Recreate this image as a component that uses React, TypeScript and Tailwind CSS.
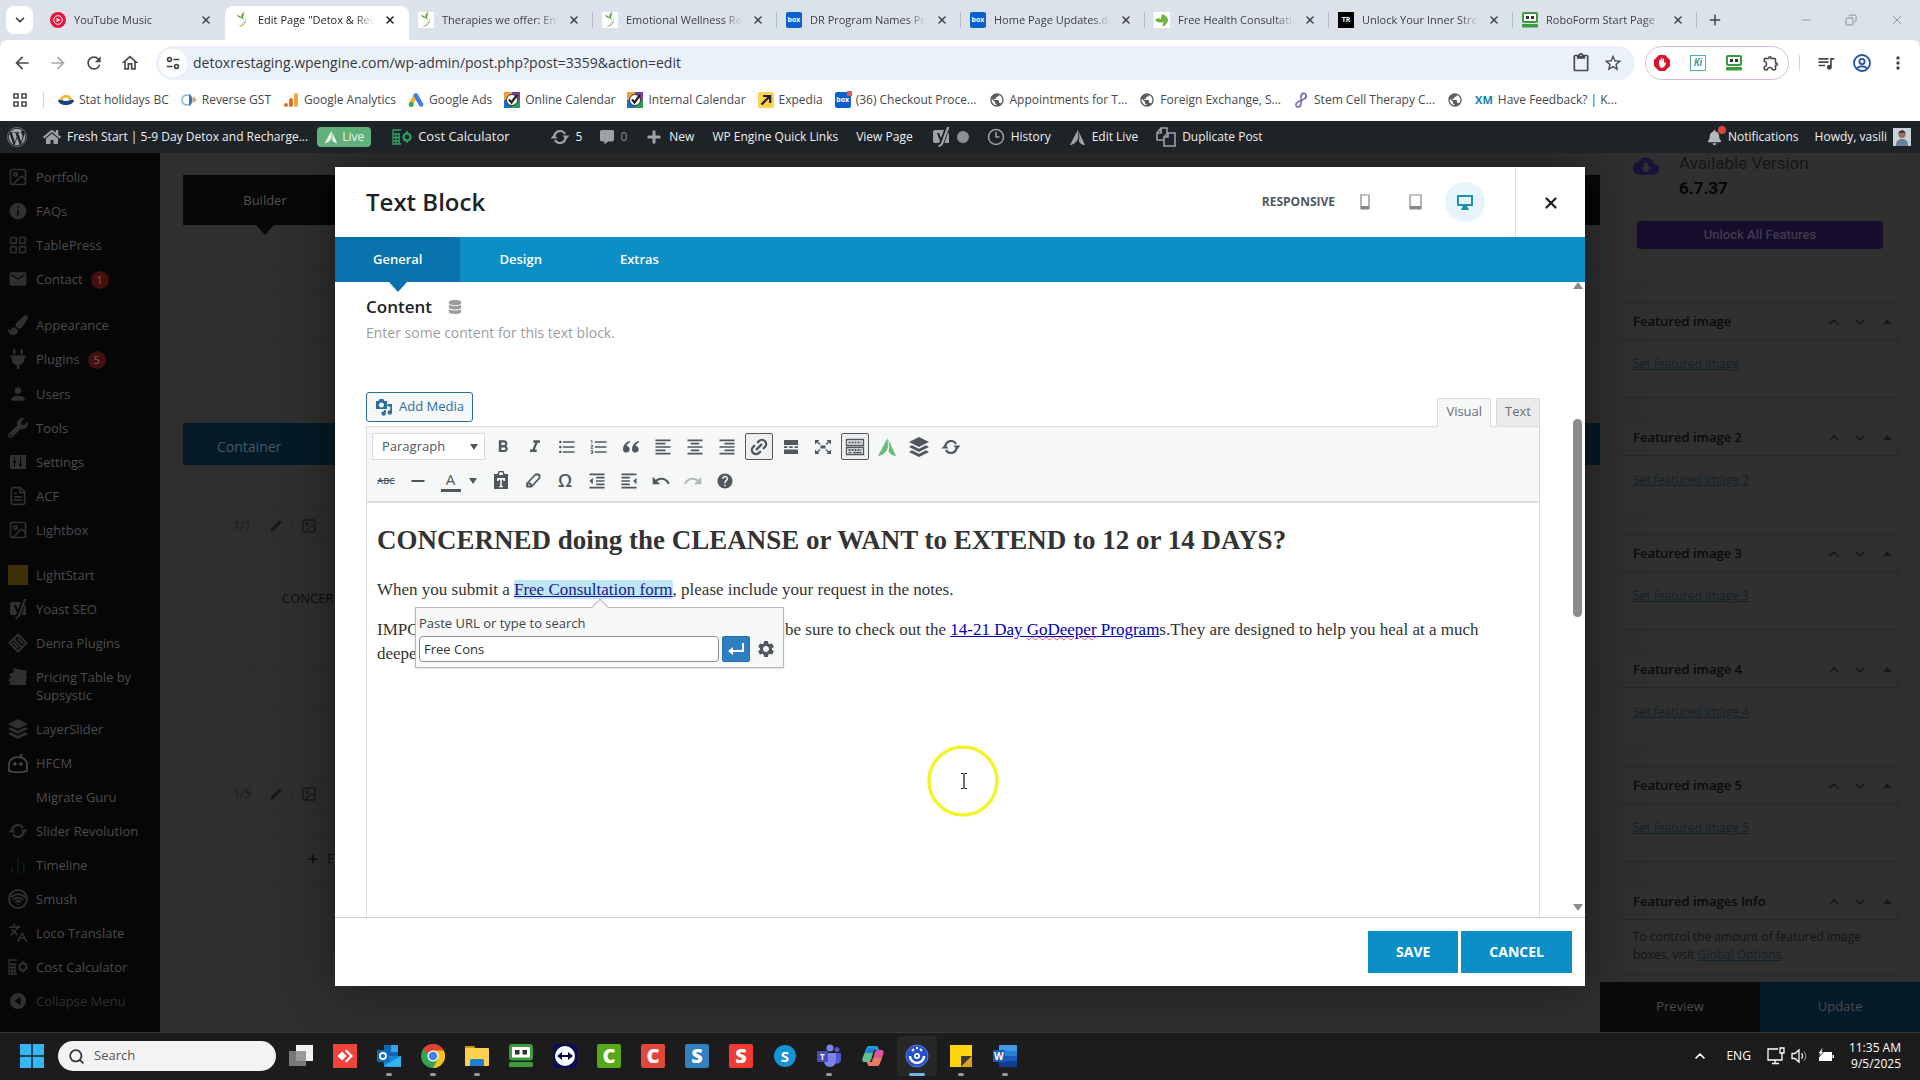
import type { ReactNode } from 'react'
import {
  MdArrowBack, MdArrowForward, MdCloudDownload, MdContentPaste, MdEmail, MdFormatAlignCenter, MdFormatAlignLeft,
  MdFormatAlignRight, MdFormatBold, MdFormatIndentDecrease, MdFormatIndentIncrease, MdFormatItalic,
  MdFormatListBulleted, MdFormatListNumbered, MdHelp, MdInfo, MdMoreVert, MdOutlineExtension, MdOutlineHome,
  MdPerson, MdPublic, MdQueueMusic, MdRefresh, MdRedo, MdSettings, MdStarBorder, MdUndo,
} from 'react-icons/md'
import { FaBell, FaCommentAlt, FaDatabase, FaHome, FaPaintBrush, FaPlug, FaWordpress, FaWrench } from 'react-icons/fa'
import {
  ChartNoAxesColumn, ChevronDown, ChevronUp, Clock3, Copy, FileText, Image, Languages, LayoutGrid, Link2, Minus,
  Pencil, Plus, Search, Wifi, X,
} from 'lucide-react'

/* ---------- small drawings ---------- */

function Leaf({ side = false }: { side?: boolean }) {
  return (
    <svg viewBox="0 0 16 16" className="size-4 shrink-0">
      <rect width="16" height="16" fill="#fff" />
      {side ? (
        <path d="M1 8c2-2 4-2 6-1 0-2 0-4 2-5 3 2 5 4 5 6s-2 5-5 7c-1-2 0-3 1-5-4 1-6 1-9-2z" fill="#6cb33f" />
      ) : (
        <>
          <path d="M3 3c2 0 3 1 4 2 0-2 1-4 3-5 0 3 0 4-1 5l1 3c-2-1-2-2-3-2-2 0-3-1-4-3z" fill="#6cb33f" />
          <path d="M12 6c1 4-1 7-6 9l-1-1c4-2 6-4 7-8z" fill="#a4c98a" />
        </>
      )}
    </svg>
  )
}

function BoxLogo() {
  return (
    <span className="flex size-4 shrink-0 items-center justify-center rounded-xs bg-[#0b5fd0] text-[7px] font-bold text-white">
      box
    </span>
  )
}

function RoboForm({ className = 'size-4' }: { className?: string }) {
  return (
    <svg viewBox="0 0 16 16" className={`${className} shrink-0`}>
      <rect x="1" y="1" width="14" height="9" rx="1" fill="#fff" stroke="#3c9a3f" strokeWidth="2" />
      <rect x="4" y="4" width="3" height="3" fill="#333" />
      <rect x="9" y="4" width="3" height="3" fill="#333" />
      <rect y="12" width="16" height="3.4" rx="1" fill="#3c9a3f" />
    </svg>
  )
}

function YouTubeMusic() {
  return (
    <svg viewBox="0 0 16 16" className="size-4 shrink-0">
      <circle cx="8" cy="8" r="8" fill="#e6163c" />
      <circle cx="8" cy="8" r="4.3" fill="none" stroke="#fff" />
      <path d="M6.6 5.7v4.6L10.3 8z" fill="#fff" />
    </svg>
  )
}

function Avada({ className }: { className?: string }) {
  return (
    <svg viewBox="0 0 20 20" fill="currentColor" className={className}>
      <path d="M10.500 1 1 19c6-1 9-5 10-9z" />
      <path d="M10.500 1 19 19c-4-.5-6-2-7.500-5 1-2 1-7-1-13z" />
    </svg>
  )
}

function Yoast({ className }: { className?: string }) {
  return (
    <svg viewBox="0 0 20 20" fill="currentColor" className={className}>
      <path d="M4 3h9l-3 8-2-5H6l3 8c-.6 1.500-1.200 2-3 2H4a2 2 0 0 1-2-2V5a2 2 0 0 1 2-2z" />
      <path d="M16 0h2.500l-6 16c-1 2.500-2.500 3.800-5 4v-2c1.500-.3 2.400-1.200 3-3z" />
      <path d="M17 6l1 .5V16h-4.500z" />
    </svg>
  )
}

function CalcIcon({ className }: { className?: string }) {
  return (
    <svg viewBox="0 0 20 16" fill="none" stroke="currentColor" className={className}>
      <path d="M9 1H1v14h8M1 5h7M4 5v10M1 8.500h7M1 12h7M7 5v10" strokeWidth="1.300" />
      <circle cx="15" cy="8" r="3.500" strokeWidth="2.200" />
      <path d="M15 2v3M15 11v3M12 12l1-2" strokeWidth="1.500" />
    </svg>
  )
}

function Refresh({ className }: { className?: string }) {
  return (
    <svg viewBox="0 0 20 20" fill="none" stroke="currentColor" strokeWidth="2.200" className={className}>
      <path d="M4.500 9a5.600 5.600 0 0 1 10.500-2M15.500 11A5.600 5.600 0 0 1 5 13" />
      <path d="M12.500 8.500h7L16 12.500zM7.500 11.500h-7L4 7.500z" fill="currentColor" stroke="none" />
    </svg>
  )
}

function Stack({ className }: { className?: string }) {
  return (
    <svg viewBox="0 0 20 20" fill="currentColor" className={className}>
      <path d="M10 0l10 5-10 5L0 5z" />
      <path d="M3 8.200 0 10l10 5 10-5-3-1.800-7 3.600z" />
      <path d="M3 13.200 0 15l10 5 10-5-3-1.800-7 3.600z" />
    </svg>
  )
}

function Check() {
  return (
    <svg viewBox="0 0 16 16" className="size-4 shrink-0">
      <path d="M0 0h8v8H0z" fill="#e8a33d" />
      <path d="M8 0h8v8H8z" fill="#7a3f98" />
      <path d="M0 8h8v8H0z" fill="#1f6fb5" />
      <path d="M8 8h8v8H8z" fill="#2f9a55" />
      <circle cx="8" cy="8" r="5.500" fill="#fff" stroke="#333" />
      <path d="M5 7.500l2.500 3L13 3" fill="none" stroke="#222" strokeWidth="2.200" />
    </svg>
  )
}

/* ---------- browser chrome ---------- */

const tabs: { title: string; icon: ReactNode; active?: boolean }[] = [
  { title: 'YouTube Music', icon: <YouTubeMusic /> },
  { title: 'Edit Page "Detox & Recharge', icon: <Leaf />, active: true },
  { title: 'Therapies we offer: Emotional', icon: <Leaf /> },
  { title: 'Emotional Wellness Retreat', icon: <Leaf /> },
  { title: 'DR Program Names Prices', icon: <BoxLogo /> },
  { title: 'Home Page Updates.docx', icon: <BoxLogo /> },
  { title: 'Free Health Consultation', icon: <Leaf side /> },
  {
    title: 'Unlock Your Inner Strength',
    icon: <span className="flex size-4 shrink-0 items-center justify-center bg-black text-[7px] font-bold text-white">TR</span>,
  },
  { title: 'RoboForm Start Page', icon: <RoboForm /> },
]

function TabStrip() {
  return (
    <div className="flex h-10 items-center bg-[#dce2ea] text-[#3b4046]">
      <button aria-label="Search tabs" className="mr-2 ml-[6px] flex h-7 w-[27px] items-center justify-center rounded-lg bg-white">
        <ChevronDown className="size-[14px]" strokeWidth={3} />
      </button>
      {tabs.map((tab, i) => (
        <div
          key={tab.title}
          className={
            tab.active
              ? 'flex h-full w-[184px] items-center pt-[6px]'
              : `flex h-full w-[184px] items-center ${i > 1 ? 'bg-[linear-gradient(#b4bdc9,#b4bdc9)] bg-[length:1px_16px] bg-[position:right_center] bg-no-repeat' : ''}`
          }
        >
          <div
            className={
              tab.active
                ? 'flex h-full w-full items-center gap-2 rounded-t-lg bg-white pr-[11px] pb-[6px] pl-[9px] text-[#1f1f1f]'
                : 'flex w-full items-center gap-2 pr-[11px] pl-[9px]'
            }
          >
            {tab.icon}
            <span className="flex-1 overflow-hidden text-[11px] whitespace-nowrap [mask-image:linear-gradient(to_right,black_84%,transparent)]">
              {tab.title}
            </span>
            <button aria-label={`Close ${tab.title}`} className="p-[2px]">
              <X className="size-3" strokeWidth={3} />
            </button>
          </div>
        </div>
      ))}
      <button aria-label="New tab" className="ml-[10px]">
        <Plus className="size-4" strokeWidth={2.2} />
      </button>
      <div className="ml-auto flex items-center gap-8 pr-[15px] text-[#8a9099]">
        <button aria-label="Minimize"><Minus className="size-[14px]" strokeWidth={1.5} /></button>
        <button aria-label="Restore"><Copy className="size-3 -scale-x-100" strokeWidth={2} /></button>
        <button aria-label="Close window"><X className="size-4" strokeWidth={1.3} /></button>
      </div>
    </div>
  )
}

function AddressBar() {
  return (
    <div className="bg-[#dce2ea]">
      <div className="flex h-[45px] items-center rounded-t-lg bg-white text-[#45484d]">
        <div className="flex items-center gap-4 pl-3">
          <button aria-label="Back"><MdArrowBack className="size-5" /></button>
          <button aria-label="Forward" className="text-[#a6a9ad]"><MdArrowForward className="size-5" /></button>
          <button aria-label="Reload"><MdRefresh className="size-5" /></button>
          <button aria-label="Home"><MdOutlineHome className="size-5" /></button>
        </div>
        <div className="ml-4 flex h-[34px] flex-1 items-center rounded-full bg-[#ebf1f9] pr-3 pl-[3px]">
          <span className="flex size-7 items-center justify-center rounded-full bg-white">
            <svg viewBox="0 0 16 16" className="size-[14px]" fill="none" stroke="#3b4046" strokeWidth="1.800">
              <circle cx="4" cy="4" r="2.200" />
              <path d="M8.500 4H15M1 12h6.500" />
              <circle cx="12" cy="12" r="2.200" />
            </svg>
          </span>
          <input
            aria-label="Address"
            defaultValue="detoxrestaging.wpengine.com/wp-admin/post.php?post=3359&action=edit"
            className="ml-[6px] flex-1 bg-transparent text-[14px] text-[#33373d] outline-none"
          />
          <MdContentPaste className="size-5" />
          <MdStarBorder className="ml-3 size-5" />
        </div>
        <div className="ml-[10px] flex h-[34px] items-center gap-5 rounded-full border border-[#d5bcd6] px-2">
          <svg viewBox="0 0 16 16" className="size-4">
            <path d="M5 0h6l5 5v6l-5 5H5l-5-5V5z" fill="#d4152b" />
            <path d="M5 7.500V5h1.200v2L6.800 3h1.200l.3 4 .5-3.500H10l.3 5L12 7c.5 2-2 6-4 6S5 11 5 7.500z" fill="#fff" />
          </svg>
          <span className="flex size-4 items-center justify-center border border-[#4fb3ad] text-[10px] font-semibold text-[#1f8f88] italic">Ki</span>
          <RoboForm />
          <MdOutlineExtension className="size-[18px]" />
        </div>
        <span className="mx-[10px] h-4 w-px bg-[#c9d6ea]" />
        <div className="flex items-center gap-4 pr-3 pl-[6px]">
          <button aria-label="Media"><MdQueueMusic className="size-5" /></button>
          <button aria-label="Profile">
            <svg viewBox="0 0 20 20" className="size-5" fill="none" stroke="#27549b" strokeWidth="1.800">
              <circle cx="10" cy="10" r="8" />
              <circle cx="10" cy="8.500" r="2.600" />
              <path d="M4.500 15.500c3-3 8-3 11 0" />
            </svg>
          </button>
          <button aria-label="Menu"><MdMoreVert className="size-5" /></button>
        </div>
      </div>
    </div>
  )
}

const bookmarks: { label: string; icon: ReactNode }[] = [
  {
    label: 'Stat holidays BC',
    icon: (
      <svg viewBox="0 0 16 16" className="size-4">
        <path d="M2 8a6 5 0 0 1 12 0z" fill="#f5b52e" />
        <path d="M5 8a3 2.500 0 0 1 6 0z" fill="#fff" />
        <path d="M0 8c4-1 5 1 8 1s5-2 8-1c0 3-4 5-8 5S0 11 0 8z" fill="#1a4480" />
      </svg>
    ),
  },
  {
    label: 'Reverse GST',
    icon: (
      <svg viewBox="0 0 16 16" className="size-4">
        <circle cx="6" cy="8" r="5" fill="none" stroke="#9dbdd6" strokeWidth="2" />
        <path d="M8 2v12c4-1 4-11 0-12z" fill="#3576a8" />
        <path d="M12 4l4 4-4 3z" fill="#e9a06b" />
      </svg>
    ),
  },
  {
    label: 'Google Analytics',
    icon: (
      <svg viewBox="0 0 16 16" className="size-4">
        <rect x="11" y="1" width="4" height="14" rx="2" fill="#f2a33a" />
        <rect x="6" y="6" width="4" height="9" rx="2" fill="#dd7326" />
        <circle cx="3" cy="13" r="2" fill="#dd7326" />
      </svg>
    ),
  },
  {
    label: 'Google Ads',
    icon: (
      <svg viewBox="0 0 16 16" className="size-4" strokeWidth="4.500" strokeLinecap="round">
        <path d="M7.500 3.500 3.500 11" stroke="#f3b72e" />
        <path d="M8 3.500 13 12.500" stroke="#3f7de8" />
        <circle cx="3.200" cy="12.500" r="2.500" fill="#34a853" />
      </svg>
    ),
  },
  { label: 'Online Calendar', icon: <Check /> },
  { label: 'Internal Calendar', icon: <Check /> },
  {
    label: 'Expedia',
    icon: (
      <svg viewBox="0 0 16 16" className="size-4">
        <rect width="16" height="16" rx="2" fill="#fcd34a" />
        <path d="M3.500 12.500 12 4M5 4h7.200v7" fill="none" stroke="#191e3b" strokeWidth="2.200" />
      </svg>
    ),
  },
  {
    label: '(36) Checkout Proce...',
    icon: (
      <span className="relative">
        <BoxLogo />
        <span className="absolute -top-px -right-px size-[5px] bg-[#e2574c]" />
      </span>
    ),
  },
  { label: 'Appointments for T...', icon: <MdPublic className="size-4 text-[#5a5d61]" /> },
  { label: 'Foreign Exchange, S...', icon: <MdPublic className="size-4 text-[#5a5d61]" /> },
  {
    label: 'Stem Cell Therapy C...',
    icon: (
      <svg viewBox="0 0 16 16" className="size-4" fill="none" stroke="#7468b5" strokeWidth="1.600">
        <path d="M13 3c-1-3-5-2-5 2 0 3 1 4 0 7-1 4-6 4-5 0 1-3 6-3 8-5 2-1 3-2 2-4z" />
      </svg>
    ),
  },
  { label: '', icon: <MdPublic className="size-4 text-[#5a5d61]" /> },
  { label: 'Have Feedback? | K...', icon: <span className="text-[11px] font-bold text-[#1284b8]">XM</span> },
]

function Bookmarks() {
  return (
    <nav className="flex h-9 items-center bg-white pb-[6px] text-[12px] text-[#45484d]">
      <svg viewBox="0 0 14 14" className="ml-[13px] size-[14px]" fill="none" stroke="currentColor" strokeWidth="1.600">
        <path d="M1 1h4v4H1zM9 1h4v4H9zM1 9h4v4H1zM9 9h4v4H9z" />
      </svg>
      <span className="mr-[14px] ml-4 h-4 w-px bg-[#c9d6ea]" />
      <div className="flex items-center gap-3">
        {bookmarks.map((b, i) => (
          <a key={i} href="#" aria-label={b.label || 'Bookmark'} className="flex items-center gap-[5px] whitespace-nowrap">
            {b.icon}
            {b.label && <span>{b.label}</span>}
          </a>
        ))}
      </div>
    </nav>
  )
}

/* ---------- WordPress ---------- */

function BarItem({ icon, children }: { icon?: ReactNode; children?: ReactNode }) {
  return (
    <a href="#" className="flex items-center gap-[6px] px-[9px] whitespace-nowrap">
      {icon && <span className="text-[#9ca2a7]">{icon}</span>}
      {children}
    </a>
  )
}

function AdminBar() {
  return (
    <div className="flex h-8 items-center bg-[#1d2327] text-[12px] text-[#f0f0f1]">
      <a href="#" aria-label="About WordPress" className="px-[7px] text-[#9ca2a7]">
        <FaWordpress className="size-5" />
      </a>
      <BarItem icon={<FaHome className="size-[18px]" />}>Fresh Start | 5-9 Day Detox and Recharge...</BarItem>
      <a href="#" className="mr-3 flex h-5 items-center gap-1 rounded-sm bg-[#5fb17b] px-[7px]">
        <Avada className="size-[14px]" />
        Live
      </a>
      <BarItem icon={<CalcIcon className="h-4 w-5 text-[#2da562]" />}>
        <span className="text-[13px]">Cost Calculator</span>
      </BarItem>
      <span className="w-[22px]" />
      <BarItem icon={<Refresh className="size-5" />}>5</BarItem>
      <BarItem icon={<FaCommentAlt className="size-[14px]" />}>
        <span className="text-[#8c9196]">0</span>
      </BarItem>
      <BarItem icon={<Plus className="size-[18px]" strokeWidth={4} />}>New</BarItem>
      <BarItem>WP Engine Quick Links</BarItem>
      <BarItem>View Page</BarItem>
      <BarItem icon={<Yoast className="size-5" />}>
        <span className="size-3 rounded-full bg-[#8c8f94]" />
      </BarItem>
      <BarItem icon={<Clock3 className="size-[18px]" />}>History</BarItem>
      <BarItem icon={<Avada className="size-[17px]" />}>Edit Live</BarItem>
      <BarItem
        icon={
          <svg viewBox="0 0 20 20" className="size-5" fill="none" stroke="currentColor" strokeWidth="1.600">
            <path d="M8 13H1V6l4-5h6v5M5 1v5H1M8 10l4-4h7v13H8zM12 6v4H8" />
          </svg>
        }
      >
        Duplicate Post
      </BarItem>
      <div className="ml-auto flex items-center gap-4 pr-[9px]">
        <a href="#" className="flex items-center gap-[6px]">
          <span className="relative text-[#b5b9bd]">
            <FaBell className="size-[15px]" />
            <span className="absolute -top-1 -right-1 size-2 rounded-full bg-[#e0443e]" />
          </span>
          Notifications
        </a>
        <a href="#" className="flex items-center gap-[6px]">
          Howdy, vasili
          <svg viewBox="0 0 18 18" className="size-[18px]">
            <rect width="18" height="18" fill="#c9d2d8" />
            <circle cx="9" cy="6.500" r="3.500" fill="#96705a" />
            <path d="M3 18c0-5 2-7 6-7s6 2 6 7z" fill="#6b7f99" />
            <path d="M5.500 6c0-5 7-5 7 0-1-2-6-2-7 0z" fill="#3b2d26" />
          </svg>
        </a>
      </div>
    </div>
  )
}

const menu: { label: string; icon: ReactNode; count?: number; gap?: boolean }[] = [
  { label: 'Portfolio', icon: <Image /> },
  { label: 'FAQs', icon: <MdInfo /> },
  { label: 'TablePress', icon: <LayoutGrid /> },
  { label: 'Contact', icon: <MdEmail />, count: 1 },
  { label: 'Appearance', icon: <FaPaintBrush />, gap: true },
  { label: 'Plugins', icon: <FaPlug />, count: 5 },
  { label: 'Users', icon: <MdPerson /> },
  { label: 'Tools', icon: <FaWrench /> },
  {
    label: 'Settings',
    icon: (
      <svg viewBox="0 0 20 20" fill="currentColor" fillRule="evenodd">
        <path d="M2 3h16v14H2zM6 5v4H5v2h1v4h1v-4h1V9H7V5zm6 0v7h-1v2h1v1h1v-1h1v-2h-1V5z" />
      </svg>
    ),
  },
  { label: 'ACF', icon: <FileText /> },
  { label: 'Lightbox', icon: <Image /> },
  { label: 'LightStart', icon: <span className="block size-full bg-[#3f3009]" />, gap: true },
  { label: 'Yoast SEO', icon: <Yoast /> },
  {
    label: 'Denra Plugins',
    icon: (
      <svg viewBox="0 0 20 20" fill="none" stroke="currentColor" strokeWidth="2">
        <path d="M10 1.500 18.500 10 10 18.500 1.500 10zM6 6.500l8 8M10 5.500l5 5M5 9.500l5 5" />
      </svg>
    ),
  },
  {
    label: 'Pricing Table by Supsystic',
    icon: (
      <svg viewBox="0 0 20 20" fill="currentColor">
        <path d="M5 1l14 3-1 4 1 2-1 3v5H2v-4H0l3-4-2-3 5-2z" />
      </svg>
    ),
  },
  { label: 'LayerSlider', icon: <Stack /> },
  {
    label: 'HFCM',
    icon: (
      <svg viewBox="0 0 20 20" fill="none" stroke="#4c4c4c" strokeWidth="1.600">
        <path d="M1 18V11a9 7 0 0 1 18 0v7c-5 1.500-13 1.500-18 0zM12 4l2-3" />
        <circle cx="7" cy="11" r="1" />
        <circle cx="13" cy="11" r="1" />
      </svg>
    ),
  },
  { label: 'Migrate Guru', icon: null },
  { label: 'Slider Revolution', icon: <Refresh /> },
  { label: 'Timeline', icon: <ChartNoAxesColumn className="text-[#0d1a22]" /> },
  {
    label: 'Smush',
    icon: (
      <span className="flex size-full items-center justify-center rounded-full border-2 border-current">
        <Wifi className="size-4" strokeWidth={3} />
      </span>
    ),
  },
  { label: 'Loco Translate', icon: <Languages /> },
  { label: 'Cost Calculator', icon: <CalcIcon /> },
]

function Sidebar() {
  return (
    <nav className="w-40 shrink-0 bg-[#060606] pt-[7px] text-[13px] leading-[18px] text-[#4a4c4e]">
      {menu.map((m) => (
        <a key={m.label} href="#" className={`flex gap-2 px-2 py-[7px] ${m.gap ? 'mt-[11px]' : ''}`}>
          <span className="size-5 shrink-0 text-[#2e3032] [&>svg]:size-full">{m.icon}</span>
          <span className="py-px">
            {m.label}
            {m.count && (
              <span className="ml-2 inline-block size-[18px] rounded-full bg-[#431010] text-center text-[11px] text-[#7a5c5c]">
                {m.count}
              </span>
            )}
          </span>
        </a>
      ))}
      <button className="flex items-center gap-2 px-2 py-[7px] text-[#2d2f31]">
        <svg viewBox="0 0 20 20" className="size-5" fill="currentColor" fillRule="evenodd">
          <path d="M10 2a8 8 0 1 1 0 16 8 8 0 0 1 0-16zm2.500 3.500L6.500 10l6 4.500z" />
        </svg>
        Collapse Menu
      </button>
    </nav>
  )
}

function ColumnTools({ size }: { size: string }) {
  return (
    <div className="ml-[43px] flex h-[31px] w-[100px] items-center divide-x divide-[#292929] border-y border-[#2b2b2b] text-[12px] text-[#191919]">
      <span className="w-[34px] text-center">{size}</span>
      <span className="flex w-[34px] justify-center"><Pencil className="size-3" fill="currentColor" /></span>
      <span className="flex w-[34px] justify-center"><Image className="size-4" /></span>
    </div>
  )
}

function Builder() {
  return (
    <div className="min-w-0 flex-1 bg-[#2f2f2f] pt-[22px] pl-[23px]">
      <div className="flex h-[50px] items-center bg-[#070707]">
        <div className="relative flex h-full w-[164px] items-center justify-center pt-[2px] text-[13px] font-medium text-[#545454]">
          Builder
          <span className="absolute top-full left-[73px] border-x-[9px] border-t-[10px] border-x-transparent border-t-[#070707]" />
        </div>
      </div>
      <div className="mt-[10px] ml-[67px] h-9 border-b border-l border-[#2b2b2b]" />
      <div className="mt-5 ml-[67px] h-[46px] border border-[#2b2b2b]" />
      <div className="mt-[86px] flex h-[42px] items-center bg-[#051a28] pt-1 pl-[34px] text-[14px] font-medium text-[#4a5860]">
        Container
      </div>
      <div className="mt-[45px]"><ColumnTools size="1/1" /></div>
      <div className="mt-[26px] ml-[67px] h-[78px] border-l border-[#2b2b2b] pt-[22px] pl-[31px] text-[13px] text-[#0c0c0c]">CONCERNED</div>
      <div className="mt-[19px] ml-[67px] h-[45px] border border-[#2b2b2b]" />
      <div className="mt-[69px]"><ColumnTools size="1/5" /></div>
      <div className="mt-[24px] ml-[67px] flex h-[50px] items-center gap-2 border border-[#2b2b2b] pt-[2px] pl-[56px] text-[13px] text-[#121212]">
        <Plus className="size-3" strokeWidth={4} /> Element
      </div>
    </div>
  )
}

const featured = ['', ' 2', ' 3', ' 4', ' 5']

function MetaBox({ title, children }: { title: string; children: ReactNode }) {
  return (
    <section className="mt-[21px] border border-[#292929] bg-[#303030]">
      <header className="flex h-9 items-center border-b border-[#262626] pr-px pl-[10px] text-[#0a0a0a]">
        <h2 className="flex-1 text-[13px] font-semibold">{title}</h2>
        <div className="flex items-center gap-[10px] text-[#151718]">
          <ChevronUp className="size-4" strokeWidth={2.5} />
          <ChevronDown className="size-4" strokeWidth={2.5} />
          <span className="mx-[5px] border-x-4 border-b-[5px] border-x-transparent border-b-[#151718]" />
        </div>
      </header>
      {children}
    </section>
  )
}

function RightColumn() {
  return (
    <div className="flex w-80 shrink-0 flex-col bg-[#2f2f2f] text-[12px]">
      <div className="flex-1 px-[22px]">
        <section className="h-[129px] border-x border-b border-[#292929] bg-[#303030] px-[14px] font-[Roboto,sans-serif]">
          <div className="flex h-[68px] gap-4">
            <MdCloudDownload className="ml-[-4px] size-[26px] text-[#1b1238]" />
            <div className="ml-1 text-[17px] leading-[25px] text-[#151515]">
              <p className="-mt-[2px]">Available Version</p>
              <p className="font-bold text-[#050505]">6.7.37</p>
            </div>
          </div>
          <button className="h-7 w-full rounded-sm bg-[#160c2c] text-[13px] font-medium text-[#403b4c]">Unlock All Features</button>
        </section>
        {featured.map((n) => (
          <MetaBox key={n} title={`Featured image${n}`}>
            <a href="#" className="block h-[57px] pt-[15px] pl-[10px] text-[#10222c] underline">
              Set featured image{n}
            </a>
          </MetaBox>
        ))}
        <MetaBox title="Featured images Info">
          <p className="h-[54px] px-[10px] pt-2 leading-[18px] text-[#121212]">
            To control the amount of featured image boxes, visit <a href="#" className="text-[#10222c] underline">Global Options</a>.
          </p>
        </MetaBox>
      </div>
      <div className="flex h-[50px] shrink-0 text-[13px] text-[#4c4c4c]">
        <button className="flex-1 bg-[#0a0a0a]">Preview</button>
        <button className="flex-1 bg-[#051a28]">Update</button>
      </div>
    </div>
  )
}

/* ---------- editor dialog ---------- */

function Tool({ label, on, wide, children }: { label: string; on?: boolean; wide?: boolean; children: ReactNode }) {
  return (
    <button
      aria-label={label}
      className={`mr-1 flex h-[27px] ${wide ? 'w-[47px]' : 'w-7'} items-center justify-center rounded-xs ${on ? 'border border-[#50575e] bg-[#f0f0f1]' : ''} [&>svg]:size-5`}
    >
      {children}
    </button>
  )
}

function Toolbar() {
  return (
    <div className="border-b-2 border-[#dcdcde] bg-[#f6f7f7] pt-[6px] pb-[7px] pl-[5px] text-[#50575e]">
      <div className="mb-[7px] flex">
        <div className="relative mr-1">
          <select aria-label="Format" className="h-[27px] w-[113px] appearance-none border border-[#dcdcde] bg-white pl-[9px] text-[13px]">
            <option>Paragraph</option>
          </select>
          <span className="pointer-events-none absolute top-[11px] right-[7px] border-x-4 border-t-[6px] border-x-transparent border-t-[#50575e]" />
        </div>
        <Tool label="Bold"><MdFormatBold /></Tool>
        <Tool label="Italic"><MdFormatItalic /></Tool>
        <Tool label="Bulleted list"><MdFormatListBulleted /></Tool>
        <Tool label="Numbered list"><MdFormatListNumbered /></Tool>
        <Tool label="Blockquote">
          <svg viewBox="0 0 20 20" fill="currentColor">
            <path d="M9 4C5 5 2 8 2 12.500A3.300 3.300 0 1 0 5.500 9C6 7.500 7 6 9 5.500zM18 4c-4 1-7 4-7 8.500A3.300 3.300 0 1 0 14.500 9C15 7.500 16 6 18 5.500z" />
          </svg>
        </Tool>
        <Tool label="Align left"><MdFormatAlignLeft /></Tool>
        <Tool label="Align center"><MdFormatAlignCenter /></Tool>
        <Tool label="Align right"><MdFormatAlignRight /></Tool>
        <Tool label="Insert link" on><Link2 className="-rotate-45" strokeWidth={2.8} /></Tool>
        <Tool label="Read more">
          <svg viewBox="0 0 20 20" fill="currentColor">
            <path d="M3 3h14v5H3zM3 9.300h3.500v1.600H3zM8.200 9.300h3.500v1.600H8.200zM13.500 9.300H17v1.600h-3.500zM3 12.500h14V17H3z" />
          </svg>
        </Tool>
        <Tool label="Fullscreen">
          <svg viewBox="0 0 20 20" fill="currentColor">
            <path d="M2 3h4.500L5 4.500 7.500 7l-1 1L4 5.500 2 7.500zM18 3v4.500L16 5.500 13.500 8l-1-1L15 4.500 13.500 3zM2 17v-4.500l2 2L6.500 12l1 1L5 15.500 6.500 17zM18 17h-4.500l1.500-1.500-2.500-2.500 1-1 2.500 2.500 2-2zM7.500 8.500h5v3h-5z" />
          </svg>
        </Tool>
        <Tool label="Toolbar toggle" on>
          <svg viewBox="0 0 20 20" fill="none" stroke="currentColor" strokeWidth="1.300">
            <path d="M1.500 2.500h17v6h-17zM1.500 10.500h17v7h-17z" />
            <path d="M3.500 5.500h13M3.500 13h13" strokeWidth="2" strokeDasharray="2 1" />
            <path d="M3.500 15.500h3M8 15.500h8.500" />
          </svg>
        </Tool>
        <Tool label="Avada builder"><Avada className="text-[#65bc7b]" /></Tool>
        <Tool label="LayerSlider"><Stack /></Tool>
        <Tool label="Slider Revolution"><Refresh /></Tool>
      </div>
      <div className="flex">
        <Tool label="Strikethrough"><span className="text-[9px] font-semibold line-through">ABC</span></Tool>
        <Tool label="Horizontal line"><Minus strokeWidth={2.4} /></Tool>
        <Tool label="Text color" wide>
          <span className="mr-2 w-5 border-b-3 border-[#50575e] text-center text-[15px] leading-5">A</span>
          <span className="mr-[2px] border-x-4 border-t-[6px] border-x-transparent border-t-[#50575e]" />
        </Tool>
        <Tool label="Paste as text">
          <svg viewBox="0 0 20 20" fill="currentColor" fillRule="evenodd">
            <path d="M3 3h3l1-1a3 3 0 0 1 6 0l1 1h3v15H3zM8 3a2 2 0 0 1 4 0v1H8zM6 7v3h1.500l.5-1.200h1.200v6L8 15.500v.7h4v-.7l-1.200-.7v-6H12l.5 1.200H14V7z" />
          </svg>
        </Tool>
        <Tool label="Clear formatting">
          <svg viewBox="0 0 20 20" fill="none" stroke="currentColor" strokeWidth="1.800" strokeLinejoin="round">
            <path d="M12.500 3.500 4 12.500v3h4.500l8-8.500V4.500l-1-1z" />
            <path d="M4 12.500h3.500l1 3" />
          </svg>
        </Tool>
        <Tool label="Special character"><span className="text-[18px] font-semibold">Ω</span></Tool>
        <Tool label="Decrease indent"><MdFormatIndentDecrease /></Tool>
        <Tool label="Increase indent"><MdFormatIndentIncrease className="-scale-x-100" /></Tool>
        <Tool label="Undo"><MdUndo /></Tool>
        <Tool label="Redo"><MdRedo className="text-[#b4b9be]" /></Tool>
        <Tool label="Keyboard shortcuts"><MdHelp className="p-px" /></Tool>
      </div>
    </div>
  )
}

function LinkPopup() {
  return (
    <div className="absolute top-[104px] left-12 w-[369px] border border-[#b4b9be] bg-[#f6f7f7] px-[3px] pt-[5px] pb-[5px] font-['Open_Sans',sans-serif] text-[13px] text-[#3c434a] shadow-sm">
      <span className="absolute -top-[7px] left-[178px] size-3 rotate-45 border-t border-l border-[#b4b9be] bg-[#f6f7f7]" />
      <label htmlFor="link-url" className="relative block h-[23px] leading-[20px]">Paste URL or type to search</label>
      <div className="flex items-center gap-[3px]">
        <input
          id="link-url"
          defaultValue="Free Cons"
          className="h-[26px] w-[300px] rounded-sm border border-[#8c8f94] bg-white px-1 text-[13px] text-[#2c3338] outline-none"
        />
        <button aria-label="Apply" className="flex h-[26px] w-7 items-center justify-center rounded-xs border border-[#2271b1] bg-[#2f80c3] text-white">
          <svg viewBox="0 0 20 20" className="size-5" fill="currentColor">
            <path d="M16 4h2v9H7v3l-5-4 5-4v3h9z" />
          </svg>
        </button>
        <button aria-label="Link options" className="ml-[3px] text-[#50575e]"><MdSettings className="size-5" /></button>
      </div>
    </div>
  )
}

function Dialog() {
  return (
    <div role="dialog" aria-label="Text Block" className="absolute inset-x-[335px] top-[14px] bottom-[46px] flex flex-col bg-white text-[#1d2327] shadow-[0_0_50px_rgba(0,0,0,0.45)]">
      <header className="flex h-[70px] shrink-0 items-center">
        <h1 className="flex-1 pl-[31px] text-[24px] font-semibold">Text Block</h1>
        <span className="text-[12px] font-bold text-[#50575e]">RESPONSIVE</span>
        <div className="ml-[10px] flex gap-[10px] pr-[30px] text-[#828789]">
          <button aria-label="Phone" className="flex size-10 items-center justify-center">
            <svg viewBox="0 0 10 16" className="h-4 w-[10px]">
              <path d="M1 1h8v14H1z" fill="none" stroke="currentColor" strokeWidth="1.200" />
              <path d="M1 12h8v3H1z" fill="currentColor" />
            </svg>
          </button>
          <button aria-label="Tablet" className="flex size-10 items-center justify-center">
            <svg viewBox="0 0 13 16" className="h-4 w-[13px]">
              <path d="M1 1h11v14H1z" fill="none" stroke="currentColor" strokeWidth="1.200" />
              <path d="M1 12h11v3H1z" fill="currentColor" />
            </svg>
          </button>
          <button aria-label="Desktop" className="flex size-10 items-center justify-center rounded-full bg-[#e7f4fb] text-[#1c94a8]">
            <svg viewBox="0 0 16 15" className="h-[15px] w-4">
              <path d="M1 1h14v9H1z" fill="none" stroke="currentColor" strokeWidth="2" />
              <path d="M6 11h4l2 4H4z" fill="currentColor" />
            </svg>
          </button>
        </div>
        <button aria-label="Close" className="flex h-full w-[70px] items-center justify-center border-l border-[#dcdcde] pt-[2px]">
          <X className="size-[18px]" strokeWidth={3} />
        </button>
      </header>

      <nav className="flex h-[45px] shrink-0 bg-[#0c8fc7] text-[13px] font-semibold text-white">
        <button className="relative bg-[#0873ad] px-[38px]">
          General
          <span className="absolute top-full left-1/2 -ml-[9px] border-x-[9px] border-t-[10px] border-x-transparent border-t-[#0873ad]" />
        </button>
        <button className="px-[39px]">Design</button>
        <button className="px-[39px]">Extras</button>
      </nav>

      <div className="flex min-h-0 flex-1 border-b border-[#c9cbcd]">
        <div className="flex min-w-0 flex-1 flex-col pt-[13px] pr-[33px] pl-[31px]">
          <div className="flex items-center gap-4">
            <h2 className="text-[17px] leading-6 font-semibold">Content</h2>
            <FaDatabase className="size-[14px] text-[#9a9d9f]" />
          </div>
          <p className="mt-1 text-[14px] leading-5 text-[#9b9d9f]">Enter some content for this text block.</p>

          <div className="mt-[49px] flex items-end justify-between">
            <button className="mb-1 flex h-[30px] items-center gap-[6px] rounded-[3px] border border-[#2b6c96] bg-[#f6f7f7] px-2 text-[13px] text-[#2a6f9e]">
              <svg viewBox="0 0 18 18" className="size-[18px]" fill="currentColor" fillRule="evenodd">
                <path d="M1 3h2.500l1-2h4l1 2H12v8H1zM6.500 4.500a2.500 2.500 0 1 0 0 5 2.500 2.500 0 0 0 0-5z" />
                <path d="M12.500 6H17v8.500a2.200 2.200 0 1 1-1.800-2.100V8.500h-2.700zM9 12h1.800v3.500A2.200 2.200 0 1 1 9 13.400z" />
              </svg>
              Add Media
            </button>
            <div className="relative z-10 -mb-px flex gap-[5px] text-[13px] text-[#6a6f74]">
              <button className="h-[29px] border border-b-0 border-[#dcdcde] bg-[#f6f7f7] px-2 pb-[2px]">Visual</button>
              <button className="h-[29px] border border-[#dcdcde] bg-[#ebebec] px-2 pb-[2px]">Text</button>
            </div>
          </div>

          <div className="flex min-h-0 flex-1 flex-col border border-b-0 border-[#dcdcde]">
            <Toolbar />
            <div className="relative flex-1 pt-[19px] pr-2 pl-[10px] font-['Liberation_Serif',serif] text-[17px] leading-6 text-[#333]">
              <h2 className="text-[27px] leading-9 font-bold">CONCERNED doing the CLEANSE or WANT to EXTEND to 12 or 14 DAYS?</h2>
              <p className="mt-5">
                When you submit a{' '}
                <a href="#" className="rounded-xs bg-[#bfe6f5] text-[#1a1a8c] underline">Free Consultation form</a>, please include your request in the notes.
              </p>
              <p className="mt-4">
                <span className="inline-block w-[408px]">IMPORTANT:</span>
                be sure to check out the{' '}
                <a href="#" className="text-[#0000b8] underline">
                  14-21 Day <span className="underline decoration-[#e05050] decoration-wavy decoration-1">GoDeeper</span> Program
                </a>
                s.They are designed to help you heal at a much
                <br />
                deeper level.
              </p>
              <LinkPopup />
            </div>
          </div>
        </div>

        <div className="flex w-3 shrink-0 flex-col items-center">
          <span className="-ml-[3px] border-x-[5px] border-b-[7px] border-x-transparent border-b-[#8b8b8b]" />
          <span className="mt-[130px] -ml-[3px] h-[198px] w-[9px] rounded-full bg-[#8b8b8b]" />
          <span className="mt-auto mb-[6px] -ml-[3px] border-x-[5px] border-t-[7px] border-x-transparent border-t-[#8b8b8b]" />
        </div>
      </div>

      <footer className="flex h-[68px] shrink-0 items-center justify-end gap-[3px] pr-[13px] text-[14px] font-bold text-white">
        <button className="h-[42px] bg-[#0c8fc7] px-7 pb-[2px]">SAVE</button>
        <button className="h-[42px] bg-[#0c8fc7] px-7 pb-[2px]">CANCEL</button>
      </footer>
    </div>
  )
}

/* ---------- taskbar ---------- */

function Tile({ bg, letter }: { bg: string; letter: string }) {
  return <span className={`flex size-6 items-center justify-center rounded-xs text-[20px] font-extrabold text-white ${bg}`}>{letter}</span>
}

const apps: { name: string; icon: ReactNode; open?: boolean; active?: boolean }[] = [
  {
    name: 'Task view',
    icon: (
      <svg viewBox="0 0 24 24" className="size-6">
        <rect x="7" y="1" width="17" height="16" fill="#f2f2f2" />
        <rect x="0" y="7" width="17" height="15" fill="#8a8a8a" opacity=".85" />
      </svg>
    ),
  },
  {
    name: 'AnyDesk',
    icon: (
      <svg viewBox="0 0 24 24" className="size-6">
        <rect width="24" height="24" fill="#ef443b" />
        <path d="M9 7.500 13.500 12 9 16.500 4.500 12z" fill="#fff" />
        <path d="M12 7l5 5-5 5 1.500 1.500L20 12l-6.500-6.500z" fill="#fff" />
      </svg>
    ),
  },
  {
    name: 'Outlook',
    open: true,
    icon: (
      <svg viewBox="0 0 24 24" className="size-6">
        <rect x="7" y="1" width="14" height="14" fill="#1066b5" />
        <rect x="14" y="1" width="7" height="7" fill="#35a7e8" />
        <path d="M6 12h18v11H7z" fill="#1b86d6" />
        <path d="M7 22 24 12v11z" fill="#35b5f0" />
        <rect x="0" y="6" width="12" height="12" rx="1" fill="#0f6cbd" />
        <circle cx="6" cy="12" r="3" fill="none" stroke="#fff" strokeWidth="1.800" />
      </svg>
    ),
  },
  {
    name: 'Chrome',
    open: true,
    icon: (
      <svg viewBox="0 0 24 24" className="size-6">
        <circle cx="12" cy="12" r="12" fill="#34a351" />
        <path d="M12 12 1.600 6A12 12 0 0 1 22.400 6z" fill="#e34133" />
        <path d="M12 6.500h10.700A12 12 0 0 1 12 24l5-9z" fill="#fbc116" />
        <circle cx="12" cy="12" r="5.600" fill="#fff" />
        <circle cx="12" cy="12" r="4.300" fill="#3f82ee" />
      </svg>
    ),
  },
  {
    name: 'File Explorer',
    open: true,
    icon: (
      <svg viewBox="0 0 24 24" className="size-6">
        <path d="M0 2h9l2 3H0z" fill="#d9930f" />
        <rect y="4" width="24" height="18" rx="1" fill="#fbcf4f" />
        <path d="M5 22v-5a2 2 0 0 1 2-2h10a2 2 0 0 1 2 2v5z" fill="#1e7fd0" />
      </svg>
    ),
  },
  { name: 'RoboForm', icon: <RoboForm className="size-6" /> },
  {
    name: 'TeamViewer',
    icon: (
      <svg viewBox="0 0 24 24" className="size-6">
        <rect width="24" height="24" rx="4" fill="#0b0d54" />
        <circle cx="12" cy="12" r="10" fill="#fff" />
        <path d="M4 12l5-4v3h6V8l5 4-5 4v-3H9v3z" fill="#0b0d54" />
      </svg>
    ),
  },
  { name: 'Camtasia', icon: <Tile bg="bg-[#56a916]" letter="C" /> },
  { name: 'Camtasia Recorder', icon: <Tile bg="bg-[#e2473c]" letter="C" /> },
  { name: 'Snagit', icon: <Tile bg="bg-[#3480c0]" letter="S" /> },
  { name: 'Snagit Editor', icon: <Tile bg="bg-[#ee3b35]" letter="S" /> },
  {
    name: 'Skype',
    icon: <span className="flex size-[22px] items-center justify-center rounded-full bg-[#1593d4] text-[15px] font-bold text-white">S</span>,
  },
  {
    name: 'Teams',
    open: true,
    icon: (
      <span className="relative">
        <svg viewBox="0 0 24 24" className="size-6">
          <circle cx="13" cy="4" r="3.500" fill="#7b83eb" />
          <circle cx="20" cy="5.500" r="2.500" fill="#5059c9" />
          <path d="M16 9h8v7c0 4-5 5-7 2z" fill="#5059c9" />
          <path d="M7 9h12v8a6 6 0 0 1-12 0z" fill="#7b83eb" />
          <rect y="7" width="11" height="11" rx="1" fill="#464eb8" />
        </svg>
        <span className="absolute top-[7px] left-[3px] text-[8px] leading-[11px] font-bold text-white">T</span>
      </span>
    ),
  },
  {
    name: 'Copilot',
    icon: (
      <svg viewBox="0 0 24 24" className="size-6">
        <path d="M8 2h7c2 0 2 1 3 4h-5l-3 10c-1 2-2 2-3 2H4c-3 0-3-2-2-5l3-8c1-2 1-3 3-3z" fill="#1aa3d8" />
        <path d="M5 9l2-5h7l-2 5z" fill="#2463d8" opacity=".6" />
        <path d="M2 13l2-4h8l-2 7c-1 2-2 2-3 2H4c-3 0-3-2-2-5z" fill="#a6d64c" opacity=".55" />
        <path d="M16 22H9c-2 0-2-1-3-4h5l3-10c1-2 2-2 3-2h3c3 0 3 2 2 5l-3 8c-1 2-1 3-3 3z" fill="#e0569b" />
        <path d="M16 22H9c-2 0-2-1-3-4h5l1-4h9l-2 5c-1 2-1 3-3 3z" fill="#f58a4b" opacity=".7" />
      </svg>
    ),
  },
  {
    name: 'Camera',
    active: true,
    icon: (
      <svg viewBox="0 0 24 24" className="size-6">
        <circle cx="12" cy="12" r="11" fill="#2450c8" stroke="#4d7be8" />
        <path d="M5 12a7 7 0 0 0 14 0" fill="none" stroke="#fff" strokeWidth="2.500" />
        <circle cx="12" cy="12" r="3" fill="#fff" />
        <circle cx="12" cy="12" r="1.200" fill="#2450c8" />
        <path d="M7 7l2-2M15 5l2 2M12 3v2" stroke="#fff" strokeWidth="2" />
      </svg>
    ),
  },
  {
    name: 'Sticky Notes',
    open: true,
    icon: (
      <svg viewBox="0 0 24 24" className="size-6">
        <path d="M1 1h22v22H1z" fill="#fcd411" />
        <path d="M12 12h11L12 23z" fill="#3b3a34" />
        <path d="M23 12v11H12z" fill="#dba21a" />
      </svg>
    ),
  },
  {
    name: 'Word',
    open: true,
    icon: (
      <span className="relative">
        <svg viewBox="0 0 24 24" className="size-6">
          <path d="M6 1h18v6H6z" fill="#3f9bea" />
          <path d="M6 7h18v5H6z" fill="#2b7cd3" />
          <path d="M6 12h18v5H6z" fill="#185abd" />
          <path d="M6 17h18v6H6z" fill="#103f91" />
          <rect y="6" width="12" height="12" rx="1" fill="#185abd" />
        </svg>
        <span className="absolute top-[6px] left-px text-[10px] leading-3 font-bold text-white">W</span>
      </span>
    ),
  },
]

function Taskbar() {
  return (
    <footer className="flex h-12 shrink-0 items-center border-t border-[#3a3a3a] bg-[#1c1c1c] pb-px text-[12px] text-white">
      <button aria-label="Start" className="ml-5">
        <svg viewBox="0 0 24 24" className="size-6" fill="#36b6f2">
          <path d="M0 0h11.300v11.300H0zM12.700 0H24v11.300H12.700zM0 12.700h11.300V24H0zM12.700 12.700H24V24H12.700z" />
        </svg>
      </button>
      <label className="ml-[14px] flex h-[30px] w-[218px] items-center gap-[9px] rounded-full bg-[#f3f3f3] pl-[10px] text-[#333]">
        <Search className="size-[17px]" strokeWidth={2.5} />
        <input aria-label="Search" placeholder="Search" className="w-32 bg-transparent text-[13px] outline-none placeholder:text-[#555]" />
      </label>
      <div className="ml-[5px] flex gap-1">
        {apps.map((a) => (
          <button
            key={a.name}
            aria-label={a.name}
            className={`relative flex size-10 items-center justify-center rounded-sm ${a.active ? 'bg-[#272727]' : ''}`}
          >
            {a.icon}
            {a.open && <span className="absolute bottom-0 h-[3px] w-[6px] rounded-full bg-[#9a9a9a]" />}
            {a.active && <span className="absolute bottom-0 h-[3px] w-4 rounded-full bg-[#6cb7e8]" />}
          </button>
        ))}
      </div>
      <div className="ml-auto flex items-center pr-[19px]">
        <ChevronUp className="size-4" strokeWidth={2.5} />
        <span className="ml-[18px]">ENG</span>
        <svg viewBox="0 0 18 18" className="ml-4 size-[18px]" fill="none" stroke="currentColor" strokeWidth="1.300">
          <path d="M11 2H1v11h14V8M5 16.500h7M8 13v3M13 1h4v5h-4zM15 6v7" />
        </svg>
        <svg viewBox="0 0 18 18" className="ml-[6px] size-[18px]" fill="none" stroke="currentColor" strokeWidth="1.300">
          <path d="M1 6.500h3L8 3v12l-4-3.500H1zM10.500 6.500c1.300 1.300 1.300 3.700 0 5" />
          <path d="M13 4.500c2.300 2.500 2.300 6.500 0 9" opacity=".4" />
        </svg>
        <svg viewBox="0 0 18 18" className="ml-2 size-[18px]">
          <path d="M2 5h13v9H2z" fill="currentColor" />
          <path d="M15.500 8H17v3h-1.500z" fill="currentColor" />
          <path d="M5 1 1 6.500h2L2 10l5-5.500H5L6 1z" fill="currentColor" stroke="#1c1c1c" strokeWidth=".8" />
        </svg>
        <div className="ml-[14px] text-right leading-4">
          <p>11:35 AM</p>
          <p>9/5/2025</p>
        </div>
      </div>
    </footer>
  )
}

export default function App() {
  return (
    <div className="relative flex h-screen flex-col overflow-hidden font-['Open_Sans',sans-serif]">
      <TabStrip />
      <AddressBar />
      <Bookmarks />
      <AdminBar />
      <main className="relative flex min-h-0 flex-1 overflow-hidden">
        <Sidebar />
        <Builder />
        <RightColumn />
        <Dialog />
      </main>
      <Taskbar />
      {/* mouse pointer with click highlight */}
      <svg viewBox="0 0 72 72" className="pointer-events-none absolute top-[745px] left-[927px] size-[72px]" fill="none">
        <circle cx="36" cy="36" r="34" stroke="#f2f52b" strokeWidth="3.500" />
        <path d="M34 28.500h2.500m1 0H40M37 29v14M34 43.500h2.500m1 0H40" stroke="#111" strokeWidth="1.200" />
      </svg>
    </div>
  )
}
